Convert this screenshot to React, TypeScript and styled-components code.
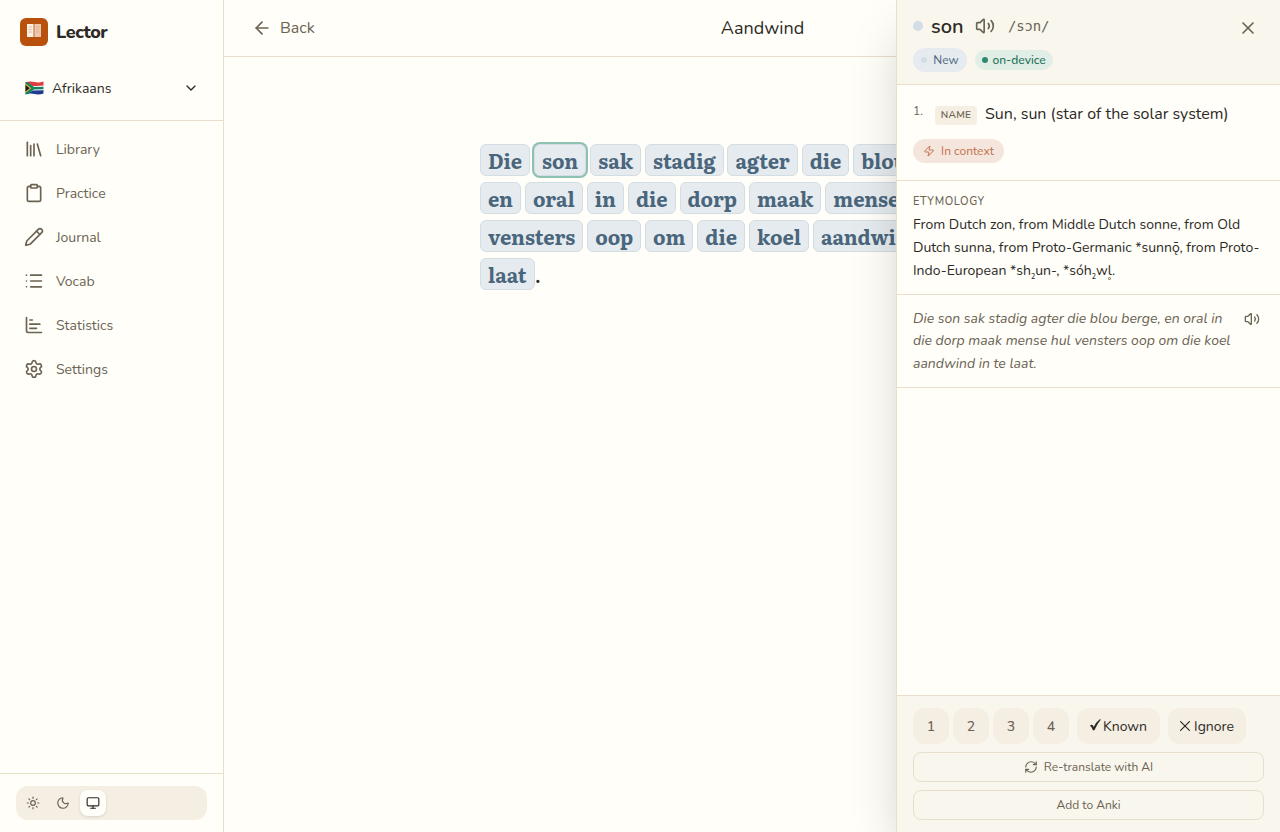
import React from "react";
import styled, { createGlobalStyle, css } from "styled-components";
import {
  ArrowLeft, ChartBar, ChevronDown, Clipboard, Library, List, Monitor, Moon,
  Pencil, RefreshCw, Settings, Sun, Volume2, X, Zap,
} from "lucide-react";

const c = {
  bg: "#fffef9",
  soft: "#f9f6ee",
  muted: "#f5eee3",
  line: "#e8dfca",
  ink: "#2c2a26",
  sub: "#6b6353",
  blue: "#4a667c",
};

const Global = createGlobalStyle`
  * { box-sizing: border-box; }
  body { margin: 0; background: ${c.bg}; color: ${c.ink}; font-family: Nunito, Lato, sans-serif; font-size: 14px; }
  button { font: inherit; color: inherit; border: 0; background: none; padding: 0; margin: 0; }
  svg { display: block; flex: none; }
`;

const Shell = styled.div`
  display: flex;
  height: 832px;
  overflow: hidden;
`;

const Sidebar = styled.aside`
  width: 224px;
  flex: none;
  display: flex;
  flex-direction: column;
  border-right: 1px solid ${c.line};
`;

const Brand = styled.div`
  display: flex;
  align-items: center;
  gap: 8px;
  height: 64px;
  padding: 0 20px;
`;

const BrandMark = styled.span`
  width: 28px;
  height: 28px;
  border-radius: 6px;
  background: #b8510b;
  display: flex;
  justify-content: center;
  padding-top: 5px;
`;

const BrandName = styled.span`
  font-size: 18px;
  font-weight: 800;
  letter-spacing: -0.45px;
`;

const Language = styled.button`
  display: flex;
  align-items: center;
  height: 48px;
  margin-bottom: 8px;
  padding: 0 24px 0 25px;
  width: 100%;
`;

const LanguageName = styled.span`
  flex: 1;
  text-align: left;
  margin-left: 8px;
`;

const Nav = styled.nav`
  flex: 1;
  border-top: 1px solid ${c.line};
  padding-top: 6px;
`;

const NavItem = styled.a`
  display: flex;
  align-items: center;
  gap: 12px;
  height: 44px;
  padding-left: 24px;
  color: ${c.sub};
`;

const SidebarFoot = styled.div`
  border-top: 1px solid ${c.line};
  padding: 12px 16px;
`;

const ThemeSwitch = styled.div`
  display: flex;
  align-items: center;
  gap: 4px;
  height: 34px;
  padding: 4px;
  border-radius: 12px;
  background: ${c.muted};
`;

const ThemeButton = styled.button<{ $active?: boolean }>`
  width: 26px;
  height: 26px;
  display: grid;
  place-items: center;
  border-radius: 8px;
  color: ${c.sub};
  ${(p) => p.$active && css`
    background: ${c.bg};
    color: ${c.ink};
    box-shadow: 0 1px 3px rgba(0, 0, 0, 0.12);
  `}
`;

const Main = styled.main`
  flex: 1;
  min-width: 0;
`;

const TopBar = styled.header`
  display: grid;
  grid-template-columns: 1fr auto 1fr;
  align-items: center;
  height: 57px;
  padding: 0 11px 0 28px;
  border-bottom: 1px solid ${c.line};
`;

const Back = styled.button`
  display: flex;
  align-items: center;
  gap: 8px;
  font-size: 16px;
  color: ${c.sub};
`;

const Title = styled.h1`
  margin: 0;
  font-size: 18px;
  font-weight: 400;
  padding-left: 4px;
`;

const Reader = styled.article`
  padding: 87px 0 0 256px;
  display: flex;
  flex-direction: column;
  gap: 6px;
`;

const Line = styled.p`
  display: flex;
  gap: 3.96px;
  margin: 0;
  height: 32px;
  font: 400 20px/32px Literata, "DejaVu Serif Condensed", "DejaVu Serif", serif;
  white-space: nowrap;
`;

const Word = styled.span<{ $selected?: boolean }>`
  flex: none;
  height: 32px;
  padding: 0 7px;
  border: 1px solid #d3dee4;
  border-radius: 6px;
  background: #e6ebef;
  color: ${c.blue};
  font-weight: 700;
  line-height: 30px;
  ${(p) => p.$selected && css`box-shadow: 0 0 0 2px #8fc1b3;`}
`;

const Stop = styled.span`
  margin-left: -4px;
  line-height: 32px;
`;

const Panel = styled.aside`
  position: absolute;
  top: 0;
  left: 896px;
  width: 384px;
  height: 832px;
  display: flex;
  flex-direction: column;
  background: ${c.bg};
  border-left: 1px solid ${c.line};
  box-shadow: 0 25px 50px -12px rgba(0, 0, 0, 0.25);
`;

const PanelHead = styled.header`
  display: flex;
  justify-content: space-between;
  height: 85px;
  padding: 14px 22px 0 16px;
  background: ${c.soft};
  border-bottom: 1px solid ${c.line};
`;

const HeadRow = styled.div`
  display: flex;
  align-items: center;
  height: 24px;
`;

const Dot = styled.i<{ $size: number; $color: string }>`
  width: ${(p) => p.$size}px;
  height: ${(p) => p.$size}px;
  border-radius: 50%;
  background: ${(p) => p.$color};
  flex: none;
`;

const Headword = styled.h2`
  margin: 0 12px 0 8px;
  width: 32px;
  font-size: 20px;
  font-weight: 600;
  color: ${c.ink};
`;

const Ipa = styled.span`
  margin-left: 13px;
  font: 14px "DejaVu Sans Mono", monospace;
  letter-spacing: -0.2px;
  color: ${c.sub};
`;

const CloseButton = styled.button`
  height: 28px;
  display: flex;
  align-items: center;
  color: ${c.sub};
`;

const Badges = styled.div`
  display: flex;
  align-items: center;
  gap: 8px;
  margin-top: 10px;
`;

const tones = {
  blue: css`height: 24px; width: 54px; gap: 6px; background: #e6ebf0; color: ${c.blue};`,
  green: css`height: 20px; width: 78px; gap: 4px; background: #e0eee6; color: #22705a; font-weight: 500;`,
  clay: css`height: 24px; width: 91px; gap: 6px; background: #f5e6dd; color: #c2704f;`,
};

const Badge = styled.span<{ $tone: keyof typeof tones }>`
  display: flex;
  align-items: center;
  justify-content: center;
  border-radius: 12px;
  font-size: 12px;
  white-space: nowrap;
  ${(p) => tones[p.$tone]}
`;

const Section = styled.section<{ $h: number }>`
  height: ${(p) => p.$h}px;
  padding: 0 16px;
  border-bottom: 1px solid ${c.line};
`;

const Sense = styled.div`
  display: flex;
  align-items: flex-start;
  padding-top: 18px;
  height: 54px;
`;

const SenseNumber = styled.span`
  width: 22px;
  font-size: 12px;
  line-height: 16px;
  color: ${c.sub};
`;

const SenseTag = styled.span`
  width: 42px;
  height: 19px;
  margin: 3px 8px 0 0;
  border-radius: 4px;
  background: ${c.muted};
  color: ${c.sub};
  font-size: 10px;
  font-weight: 600;
  line-height: 19px;
  text-align: center;
  letter-spacing: 0.25px;
`;

const SenseText = styled.span`
  font-size: 16px;
  line-height: 22px;
  white-space: nowrap;
`;

const Label = styled.h3`
  margin: 0;
  padding-top: 13px;
  font-size: 11px;
  line-height: 16px;
  font-weight: 500;
  letter-spacing: 0.6px;
  color: ${c.sub};
`;

const Prose = styled.p`
  margin: 3px 0 0;
  line-height: 23px;
  white-space: nowrap;
`;

const Row = styled.span`
  display: block;
`;

const Sub = styled.sub`
  font-size: 7px;
  font-weight: 600;
  line-height: 0;
  vertical-align: -4px;
`;

const Syllabic = styled.span`
  position: relative;

  &::after {
    content: "";
    position: absolute;
    left: 50%;
    bottom: 0;
    width: 3px;
    height: 3px;
    margin-left: -1.5px;
    border-radius: 50%;
    background: radial-gradient(circle, transparent 0.4px, #8a857a 0.9px);
  }
`;

const Example = styled.div`
  display: flex;
  justify-content: space-between;
  padding: 12.7px 4px 0 0;
  color: ${c.sub};
  font-style: italic;
  line-height: 22.75px;
  white-space: nowrap;
`;

const ExampleAudio = styled.button`
  display: flex;
  height: 22px;
  align-items: center;
`;

const Actions = styled.footer`
  margin-top: auto;
  height: 137px;
  padding: 12px 16px;
  display: flex;
  flex-direction: column;
  gap: 8px;
  background: ${c.soft};
  border-top: 1px solid ${c.line};
`;

const Levels = styled.div`
  display: flex;
  gap: 4px;
`;

const Level = styled.button<{ $w?: number; $strong?: boolean; $gap?: number }>`
  width: ${(p) => p.$w ?? 36}px;
  height: 36px;
  margin-left: ${(p) => (p.$strong ? 4 : 0)}px;
  border-radius: 12px;
  background: ${c.muted};
  color: ${(p) => (p.$strong ? c.ink : c.sub)};
  display: flex;
  align-items: center;
  justify-content: center;
  gap: ${(p) => p.$gap ?? 0}px;
  font-weight: ${(p) => (p.$strong ? 400 : 500)};
`;

const WideButton = styled.button`
  height: 30px;
  display: flex;
  align-items: center;
  justify-content: center;
  gap: 6px;
  border: 1px solid ${c.line};
  border-radius: 8px;
  color: ${c.sub};
  font-size: 12px;
`;

const BookIcon = () => (
  <svg width="16" height="16" viewBox="0 0 16 16">
    <path d="M1 1h6.7v13H1z" fill="#fbeee4" />
    <path d="M8.3 1H15v13H8.3z" fill="#ecc9ae" />
    <path d="M7.5 1h1v13h-1z" fill="#d98e5c" />
    <path d="M2.5 4h3.5M2.5 6.5h3M2.5 9h3.5M10 4h3.5M10 6.5h3M10 9h3.5" stroke="#dba882" strokeWidth=".7" />
  </svg>
);

const FlagIcon = () => (
  <svg width="19" height="14" viewBox="0 0 19 14">
    <path d="M.5 1.2Q5 0 9.500 1T18.500.5V5H.5z" fill="#dd3c41" />
    <path d="M.5 9H18.500v3.500Q14 14 9.500 13T.5 13.200z" fill="#1c3a91" />
    <path d="M.5 1.500 8.200 5.300 18.500 4.600V9.300L8.200 9.400.5 13z" fill="#fff" />
    <path d="M.5 1.200H2.800L9 6 18.500 5.700V8.300L9 8.500 2.800 13.200H.5z" fill="#15835c" />
    <path d="M.5 2.600 6.400 7.200.5 11.800z" fill="#f2b437" />
    <path d="M.5 4 4.700 7.200.5 10.500z" fill="#16181a" />
  </svg>
);

const CheckMark = () => (
  <svg width="11" height="14" viewBox="0 0 11 14" fill="currentColor">
    <path d="M0 6.800Q1.500 5.200 2.900 6.200L3.700 8Q6 3 9.800.2L10.900.5Q7 5 4.600 11L3 11.400Q2.100 8.400 0 6.800z" />
  </svg>
);

const CrossMark = () => (
  <svg width="10" height="10" viewBox="0 0 10 10" stroke="currentColor" strokeWidth="1.2" strokeLinecap="round">
    <path d="M.6.6l8.800 8.800M9.400.6L.6 9.400" />
  </svg>
);

const nav = [
  { icon: Library, label: "Library" },
  { icon: Clipboard, label: "Practice" },
  { icon: Pencil, label: "Journal" },
  { icon: List, label: "Vocab" },
  { icon: ChartBar, label: "Statistics" },
  { icon: Settings, label: "Settings" },
];

const lines = [
  "Die son sak stadig agter die blou",
  "en oral in die dorp maak mense",
  "vensters oop om die koel aandwind",
  "laat",
];

export default function App() {
  return (
    <Shell>
      <Global />
      <Sidebar>
        <Brand>
          <BrandMark><BookIcon /></BrandMark>
          <BrandName>Lector</BrandName>
        </Brand>
        <Language>
          <FlagIcon />
          <LanguageName>Afrikaans</LanguageName>
          <ChevronDown size={16} />
        </Language>
        <Nav>
          {nav.map(({ icon: Icon, label }) => (
            <NavItem key={label}><Icon size={20} />{label}</NavItem>
          ))}
        </Nav>
        <SidebarFoot>
          <ThemeSwitch>
            <ThemeButton><Sun size={14} /></ThemeButton>
            <ThemeButton><Moon size={14} /></ThemeButton>
            <ThemeButton $active><Monitor size={14} /></ThemeButton>
          </ThemeSwitch>
        </SidebarFoot>
      </Sidebar>
      <Main>
        <TopBar>
          <Back><ArrowLeft size={20} />Back</Back>
          <Title>Aandwind</Title>
        </TopBar>
        <Reader>
          {lines.map((line, i) => (
            <Line key={line}>
              {line.split(" ").map((text) => (
                <Word key={text} $selected={text === "son"}>{text}</Word>
              ))}
              {i === 3 && <Stop>.</Stop>}
            </Line>
          ))}
        </Reader>
      </Main>
      <Panel>
        <PanelHead>
          <div>
            <HeadRow>
              <Dot $size={10} $color="#d3dde4" />
              <Headword>son</Headword>
              <Volume2 size={20} color={c.sub} />
              <Ipa>/sɔn/</Ipa>
            </HeadRow>
            <Badges>
              <Badge $tone="blue"><Dot $size={6} $color="#d3dde4" />New</Badge>
              <Badge $tone="green"><Dot $size={6} $color="#2d8a70" />on-device</Badge>
            </Badges>
          </div>
          <CloseButton><X size={20} /></CloseButton>
        </PanelHead>
        <Section $h={96}>
          <Sense>
            <SenseNumber>1.</SenseNumber>
            <SenseTag>NAME</SenseTag>
            <SenseText>Sun, sun (star of the solar system)</SenseText>
          </Sense>
          <Badge $tone="clay"><Zap size={12} />In context</Badge>
        </Section>
        <Section $h={114}>
          <Label>ETYMOLOGY</Label>
          <Prose>
            <Row>From Dutch zon, from Middle Dutch sonne, from Old</Row>
            <Row>Dutch sunna, from Proto-Germanic *sunnǭ, from Proto-</Row>
            <Row>Indo-European *sh<Sub>2</Sub>un-, *sóh<Sub>2</Sub>w<Syllabic>l</Syllabic>.</Row>
          </Prose>
        </Section>
        <Section $h={93}>
          <Example>
            <div>
              <Row>Die son sak stadig agter die blou berge, en oral in</Row>
              <Row>die dorp maak mense hul vensters oop om die koel</Row>
              <Row>aandwind in te laat.</Row>
            </div>
            <ExampleAudio><Volume2 size={16} /></ExampleAudio>
          </Example>
        </Section>
        <Actions>
          <Levels>
            {[1, 2, 3, 4].map((n) => <Level key={n}>{n}</Level>)}
            <Level $w={83} $strong $gap={2}><CheckMark />Known</Level>
            <Level $w={78} $strong $gap={4}><CrossMark />Ignore</Level>
          </Levels>
          <WideButton><RefreshCw size={14} />Re-translate with AI</WideButton>
          <WideButton>Add to Anki</WideButton>
        </Actions>
      </Panel>
    </Shell>
  );
}
